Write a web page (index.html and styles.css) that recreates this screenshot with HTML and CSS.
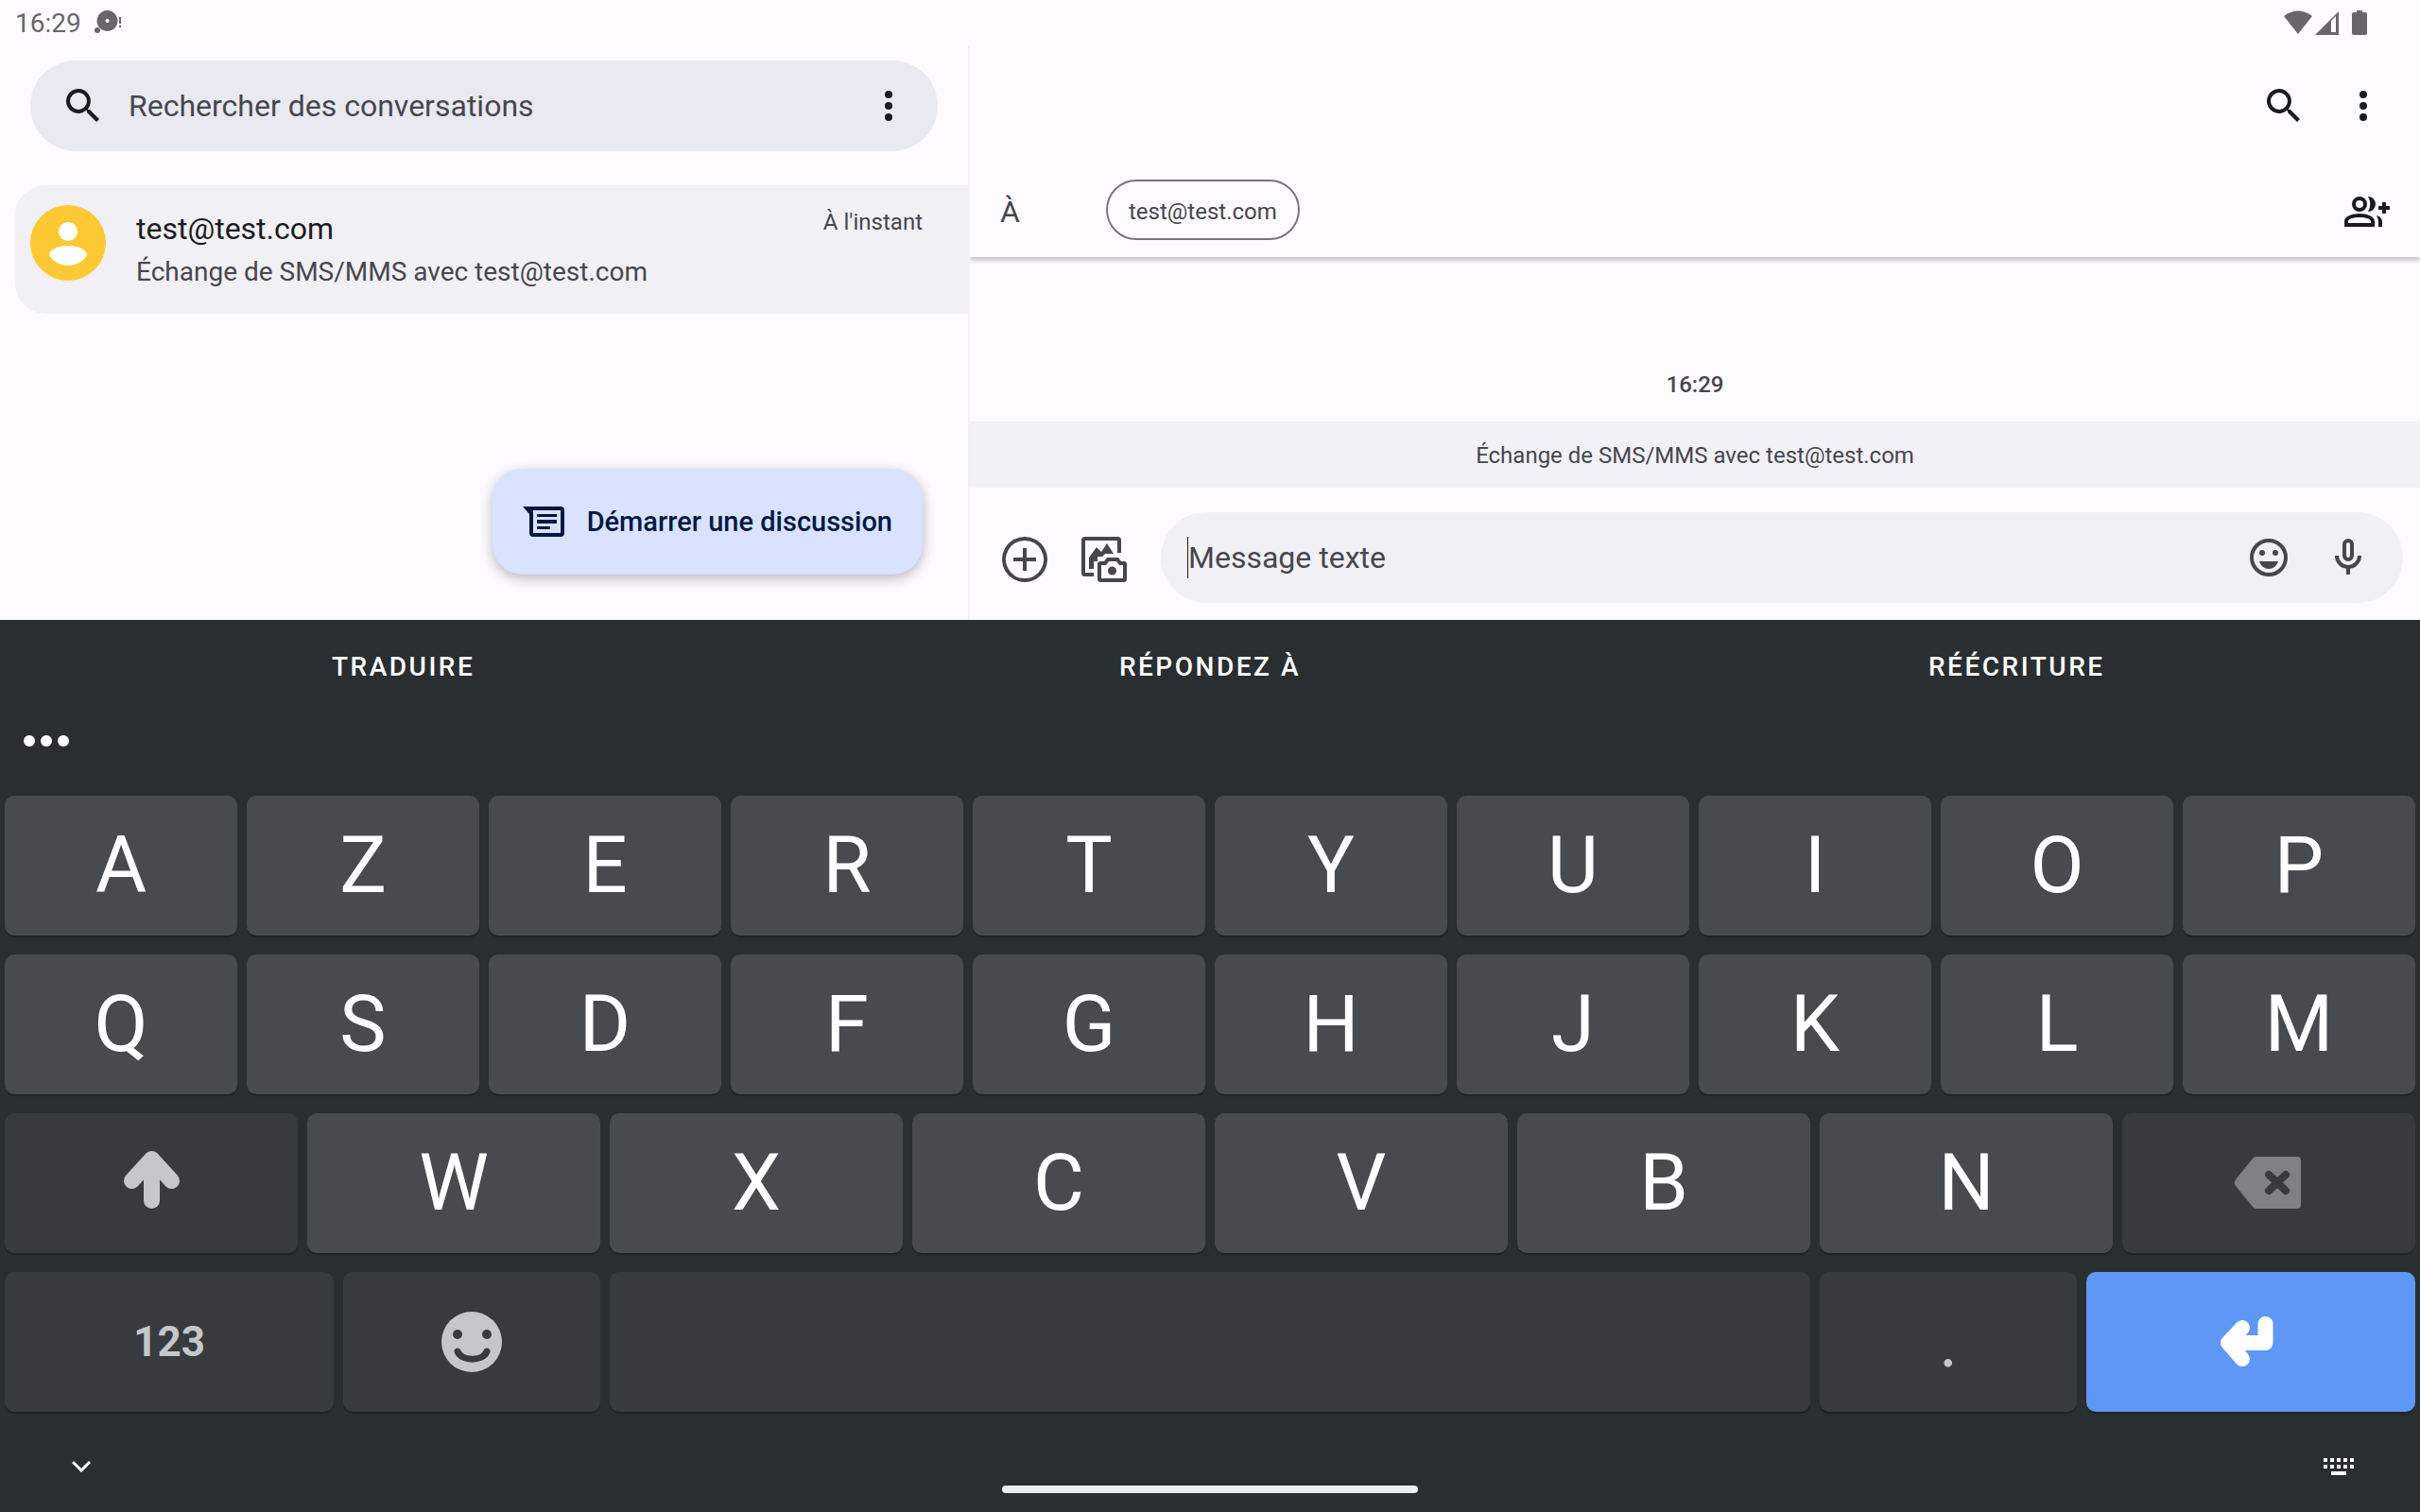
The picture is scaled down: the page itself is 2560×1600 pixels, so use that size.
FILE: index.html
```html
<!DOCTYPE html>
<html lang="fr">
<head>
    <meta charset="utf-8">
    <title>Messages</title>
    <link rel="stylesheet" href="styles.css">
</head>
<body>
    <header class="status">
        <span class="clock">16:29</span>
        <svg class="notif" viewBox="0 0 30 26" fill="currentColor"><path fill-rule="evenodd" d="M13.500 0a11 11 0 1 0 .01 0zM13.500 9a2 2 0 1 1-.01 0z"/><circle cx="3" cy="21" r="3"/><path d="M26 7h2v7h-2zM26 16h2v2h-2z"/></svg>
        <div class="status-icons">
            <svg width="30" height="26" viewBox="0 0 30 26" fill="currentColor"><path d="M0 6Q15-5 30 6L15 25z"/></svg>
            <svg width="26" height="26" viewBox="0 0 26 26" fill="currentColor"><path fill-rule="evenodd" d="M0 26L25 1v25zM17 11v12h5V6z"/></svg>
            <svg class="battery" width="16" height="26" viewBox="0 0 16 26" fill="currentColor"><path d="M5 0h6v2h3a2 2 0 0 1 2 2v20a2 2 0 0 1-2 2H2a2 2 0 0 1-2-2V4a2 2 0 0 1 2-2h3z"/></svg>
        </div>
    </header>

    <main class="panes">
        <section class="list-pane">
            <div class="search">
                <svg class="icon" viewBox="0 0 24 24"><path d="M15.500 14h-.8l-.3-.3A6.500 6.500 0 1 0 13.700 14.400l.3.300v.8l5 5 1.500-1.500zM9.500 14a4.500 4.500 0 1 1 0-9 4.500 4.500 0 0 1 0 9z"/></svg>
                <input type="text" placeholder="Rechercher des conversations" aria-label="Rechercher des conversations">
                <button type="button" aria-label="Plus d'options"><svg class="icon" viewBox="0 0 24 24"><circle cx="12" cy="6" r="2"/><circle cx="12" cy="12" r="2"/><circle cx="12" cy="18" r="2"/></svg></button>
            </div>
            <a class="conversation" href="#">
                <svg class="avatar" viewBox="0 0 80 80"><circle cx="40" cy="40" r="40" fill="#fcc934"/><circle cx="40" cy="28" r="10" fill="#fff"/><path d="M20 53c0-6 10-10 20-10s20 4 20 10c-4 7-12 11-20 11s-16-4-20-11z" fill="#fff"/></svg>
                <span class="who">
                    <span class="name">test@test.com</span>
                    <span class="snippet">Échange de SMS/MMS avec test@test.com</span>
                </span>
                <span class="when">À l'instant</span>
            </a>
            <button type="button" class="start">
                <svg width="44" height="32" viewBox="0 0 44 32"><path fill-rule="evenodd" d="M0 0h40a4 4 0 0 1 4 4v24a4 4 0 0 1-4 4H11a4 4 0 0 1-4-4V8zM11 4v24h29V4z"/><path d="M15 8h21v3H15zM15 14h21v4H15zM15 21h14v3H15z"/></svg>
                Démarrer une discussion
            </button>
        </section>

        <section class="chat-pane">
            <div class="toolbar">
                <button type="button" aria-label="Rechercher"><svg class="icon" viewBox="0 0 24 24"><path d="M15.500 14h-.8l-.3-.3A6.500 6.500 0 1 0 13.700 14.400l.3.300v.8l5 5 1.500-1.500zM9.500 14a4.500 4.500 0 1 1 0-9 4.500 4.500 0 0 1 0 9z"/></svg></button>
                <button type="button" aria-label="Plus d'options"><svg class="icon" viewBox="0 0 24 24"><circle cx="12" cy="6" r="2"/><circle cx="12" cy="12" r="2"/><circle cx="12" cy="18" r="2"/></svg></button>
            </div>
            <div class="recipients">
                <span class="to">À</span>
                <button type="button" class="chip">test@test.com</button>
                <button type="button" class="add" aria-label="Ajouter des personnes"><svg class="icon" viewBox="0 0 48 48"><circle cx="16" cy="16" r="6" fill="none" stroke="currentColor" stroke-width="4"/><path fill-rule="evenodd" d="M0 40v-6c0-5 8-8 16-8s16 3 16 8v6zM4 36h24v-2c0-2-5-4-12-4s-12 2-12 4z"/><path d="M25 8a8 8 0 0 1 0 16c3-5 3-11 0-16zM34 28c4 1 6 4 6 7v5h-4v-5c0-3-1-5-2-7zM36 18h4v-4h4v4h4v4h-4v4h-4v-4h-4z"/></svg></button>
            </div>
            <div class="thread">
                <time class="stamp">16:29</time>
                <p class="notice">Échange de SMS/MMS avec test@test.com</p>
            </div>
            <div class="compose">
                <button type="button" aria-label="Ajouter"><svg class="icon" viewBox="0 0 48 48"><path d="M24 2a22 22 0 1 0 .01 0zM24 12v24M12 24h24" fill="none" stroke="currentColor" stroke-width="4"/></svg></button>
                <button type="button" aria-label="Galerie"><svg class="icon" viewBox="0 0 48 48"><path d="M40 17V3.500a1.500 1.500 0 0 0-1.500-1.500H3.500A1.500 1.500 0 0 0 2 3.500V38.500A1.500 1.500 0 0 0 3.500 40H13" fill="none" stroke="currentColor" stroke-width="4"/><path d="M8 34V22l8-11 5 5 6-9 7 11h-9l-3 3h-5v5h-4v8z"/><path fill-rule="evenodd" d="M27 22h12l3 4h3a3 3 0 0 1 3 3v16a3 3 0 0 1-3 3H20a3 3 0 0 1-3-3V29a3 3 0 0 1 3-3h4zM21 30v14h23V30h-4l-3-4h-8l-3 4z"/><circle cx="32.500" cy="36" r="4.500"/></svg></button>
                <div class="message">
                    <span class="caret"></span>
                    <input type="text" placeholder="Message texte" aria-label="Message texte">
                    <button type="button" aria-label="Emoji"><svg class="icon" viewBox="0 0 24 24"><circle cx="12" cy="12" r="9" fill="none" stroke="currentColor" stroke-width="2"/><circle cx="8.500" cy="9.500" r="1.500"/><circle cx="15.500" cy="9.500" r="1.500"/><path d="M7 14h10c-.8 2.400-2.700 4-5 4s-4.200-1.600-5-4z"/></svg></button>
                    <button type="button" aria-label="Micro"><svg class="icon" viewBox="0 0 24 24"><path fill-rule="evenodd" d="M12 2a3 3 0 0 1 3 3v6a3 3 0 0 1-6 0V5a3 3 0 0 1 3-3zm0 2a1 1 0 0 0-1 1v6a1 1 0 0 0 2 0V5a1 1 0 0 0-1-1z"/><path d="M17 11a5 5 0 0 1-10 0H5a7 7 0 0 0 6 6.900V21h2v-3.100A7 7 0 0 0 19 11z"/></svg></button>
                </div>
            </div>
        </section>
    </main>

    <section class="keyboard">
        <div class="actions">
            <button type="button">TRADUIRE</button>
            <button type="button">RÉPONDEZ À</button>
            <button type="button">RÉÉCRITURE</button>
        </div>
        <div class="tools">
            <button type="button" aria-label="Plus"><svg width="48" height="12" viewBox="0 0 48 12" fill="currentColor"><circle cx="6" cy="6" r="6"/><circle cx="24" cy="6" r="6"/><circle cx="42" cy="6" r="6"/></svg></button>
        </div>
        <div class="keys tenths">
            <button>A</button>
            <button>Z</button>
            <button>E</button>
            <button>R</button>
            <button>T</button>
            <button>Y</button>
            <button>U</button>
            <button>I</button>
            <button>O</button>
            <button>P</button>
        </div>
        <div class="keys tenths">
            <button>Q</button>
            <button>S</button>
            <button>D</button>
            <button>F</button>
            <button>G</button>
            <button>H</button>
            <button>J</button>
            <button>K</button>
            <button>L</button>
            <button>M</button>
        </div>
        <div class="keys eighths">
            <button class="dim" aria-label="Majuscule"><svg class="glyph" viewBox="0 0 80 80"><path d="M19.500 37.500L40.500 14.500 61.500 37.500M40.500 20V58.500" fill="none" stroke="currentColor" stroke-width="17" stroke-linecap="round" stroke-linejoin="round"/></svg></button>
            <button>W</button>
            <button>X</button>
            <button>C</button>
            <button>V</button>
            <button>B</button>
            <button>N</button>
            <button class="dim erase" aria-label="Effacer"><svg class="glyph" viewBox="0 0 80 80"><path d="M27 12H70a4 4 0 0 1 4 4V63a4 4 0 0 1-4 4H27a5 5 0 0 1-4-2L5 43a6 6 0 0 1 0-7L23 14a5 5 0 0 1 4-2z" fill="currentColor"/><path d="M40 31L58 48M58 31L40 48" stroke="#373b3e" stroke-width="8" stroke-linecap="round"/></svg></button>
        </div>
        <div class="keys last">
            <button class="dim wide numbers">123</button>
            <button class="dim" aria-label="Emoji"><svg class="glyph" viewBox="0 0 80 80"><circle cx="40" cy="40" r="32" fill="currentColor"/><circle cx="25" cy="32" r="5" fill="#373b3e"/><circle cx="56" cy="32" r="5" fill="#373b3e"/><path d="M25 50C29 61 52 61 56 50" fill="none" stroke="#373b3e" stroke-width="7" stroke-linecap="round"/></svg></button>
            <button class="dim space" aria-label="Espace"></button>
            <button class="dim period">.</button>
            <button class="wide enter" aria-label="Entrée"><svg class="glyph" viewBox="0 0 80 80"><path d="M55.500 21V41H16M31 25L16 41 31 58" fill="none" stroke="currentColor" stroke-width="16" stroke-linecap="round" stroke-linejoin="round"/></svg></button>
        </div>
        <nav class="navbar">
            <button type="button" aria-label="Masquer le clavier"><svg width="20" height="12" viewBox="0 0 20 12"><path d="M1 1l9 9 9-9" fill="none" stroke="currentColor" stroke-width="3"/></svg></button>
            <span class="home"></span>
            <button type="button" class="switch" aria-label="Changer de clavier"><svg width="32" height="18" viewBox="0 0 32 18" fill="currentColor"><path d="M0 0h4v4H0zM7 0h4v4H7zM14 0h4v4h-4zM21 0h4v4h-4zM28 0h4v4h-4zM0 7h4v4H0zM7 7h4v4H7zM14 7h4v4h-4zM21 7h4v4h-4zM28 7h4v4h-4zM8 14h16v4H8z"/></svg></button>
        </nav>
    </section>
</body>
</html>
```
FILE: styles.css
```css
* {
    box-sizing: border-box;
}
body {
    margin: 0;
    min-height: 100vh;
    display: flex;
    flex-direction: column;
    font-family: Roboto, sans-serif;
    background: #fdfbff;
    color: #1b1b1f;
}
button {
    display: flex;
    align-items: center;
    justify-content: center;
    padding: 0;
    border: none;
    background: none;
    color: inherit;
    font: inherit;
}
input {
    flex: 1;
    min-width: 0;
    padding: 0;
    border: none;
    outline: none;
    background: none;
    font: inherit;
    font-size: 32px;
    color: #1b1b1f;
}
input::placeholder {
    color: #47464f;
    opacity: 1;
}
svg {
    display: block;
    flex: none;
}
.icon {
    width: 48px;
    height: 48px;
    fill: currentColor;
}

/* status bar */
.status {
    display: flex;
    align-items: center;
    height: 48px;
    padding: 0 56px 0 16px;
    color: #68666a;
}
.clock {
    font-size: 28px;
}
.notif {
    width: 30px;
    height: 26px;
    margin-left: 14px;
}
.status-icons {
    display: flex;
    gap: 3px;
    margin-left: auto;
}
.battery {
    margin-left: 10px;
}

/* panes */
.panes {
    flex: 1;
    display: grid;
    grid-template-columns: 2fr 3fr;
}
.list-pane {
    display: flex;
    flex-direction: column;
    padding: 16px 0 48px 16px;
}
.search {
    display: flex;
    align-items: center;
    gap: 24px;
    height: 96px;
    margin: 0 32px 36px 16px;
    padding: 0 28px 0 32px;
    border-radius: 48px;
    background: #e9e9f2;
}
.conversation {
    display: flex;
    height: 136px;
    padding: 21px 48px 0 16px;
    border-radius: 32px 0 0 32px;
    background: #f1f0f4;
    color: #1b1b1f;
    text-decoration: none;
}
.avatar {
    width: 80px;
    height: 80px;
}
.who {
    flex: 1;
    display: flex;
    flex-direction: column;
    margin-left: 32px;
}
.name {
    font-size: 32px;
    line-height: 50px;
}
.snippet {
    font-size: 28px;
    line-height: 42px;
    color: #47464f;
}
.when {
    font-size: 24px;
    line-height: 36px;
    color: #47464f;
}
.start {
    align-self: flex-end;
    gap: 24px;
    height: 112px;
    margin: auto 48px 0 0;
    padding: 0 32px;
    border-radius: 32px;
    background: #d9e2ff;
    box-shadow: 0 4px 14px rgba(0, 0, 0, 0.28);
    color: #001944;
    fill: #001944;
    font-size: 29px;
    font-weight: 500;
}
.chat-pane {
    display: flex;
    flex-direction: column;
    border-left: 2px solid #f1f0f4;
}
.toolbar {
    display: flex;
    justify-content: flex-end;
    align-items: center;
    gap: 36px;
    height: 128px;
    padding-right: 36px;
}
.recipients {
    display: flex;
    align-items: center;
    height: 96px;
    padding: 0 32px;
    box-shadow: 0 4px 4px rgba(0, 0, 0, 0.2);
    clip-path: inset(0 0 -12px 0);
}
.to {
    width: 112px;
    font-size: 32px;
    color: #47464f;
}
.chip {
    height: 64px;
    margin-bottom: 4px;
    padding: 4px 22px 0;
    border: 2px solid #77767d;
    border-radius: 32px;
    font-size: 24px;
    color: #47464f;
}
.add {
    margin-left: auto;
}
.thread {
    flex: 1;
    display: flex;
    flex-direction: column;
    justify-content: flex-end;
    text-align: center;
    font-size: 24px;
    color: #47464f;
}
.stamp {
    margin-bottom: 24px;
    line-height: 30px;
    font-weight: 500;
}
.notice {
    margin: 0;
    padding-top: 2px;
    line-height: 68px;
    background: #f2f1f8;
}
.compose {
    display: flex;
    align-items: center;
    gap: 36px;
    padding: 26px 18px 18px 34px;
    color: #47464f;
}
.compose > button {
    margin-top: 4px;
}
.message {
    flex: 1;
    display: flex;
    align-items: center;
    height: 96px;
    padding: 0 34px 0 28px;
    border-radius: 48px;
    background: #f1f0f4;
}
.message button {
    margin-left: 36px;
}
.caret {
    width: 1px;
    height: 44px;
    background: #1b1b1f;
}

/* keyboard */
.keyboard {
    background: #292e31;
    color: #fff;
}
.actions {
    display: grid;
    grid-template-columns: repeat(3, 1fr);
    height: 98px;
}
.actions button {
    font-size: 28px;
    font-weight: 500;
    letter-spacing: 0.09em;
}
.tools {
    display: flex;
    height: 60px;
    margin-bottom: 28px;
    padding-left: 25px;
}
.keys {
    display: flex;
    margin-bottom: 20px;
}
.keys button {
    height: 148px;
    margin: 0 5px;
    border-radius: 10px;
    background: #484b4d;
    box-shadow: 0 2px #1f2326;
    font-size: 83px;
    line-height: 96px;
}
.tenths button {
    width: calc(10% - 10px);
}
.eighths button {
    width: calc(12.5% - 10px);
}
.last button {
    width: calc(11% - 10px);
}
.last .wide {
    width: calc(14% - 10px);
}
.last .space {
    width: calc(50% - 10px);
}
.keys .dim {
    background: #373b3e;
    color: #c5c7c9;
}
.keys .erase {
    color: #7f8284;
}
.keys .numbers {
    font-size: 44px;
    font-weight: 700;
}
.keys .period {
    font-family: Lato, sans-serif;
    font-size: 68px;
}
.keys .enter {
    background: #5e97f6;
}
.glyph {
    width: 80px;
    height: 80px;
}
.navbar {
    display: grid;
    grid-template-columns: 1fr 440px 1fr;
    height: 86px;
}
.navbar button {
    height: 76px;
    justify-self: start;
    margin-left: 76px;
}
.navbar .switch {
    justify-self: end;
    margin: 0 70px 0 0;
}
.home {
    align-self: end;
    height: 8px;
    margin-bottom: 20px;
    border-radius: 4px;
    background: #eceeed;
}
```
